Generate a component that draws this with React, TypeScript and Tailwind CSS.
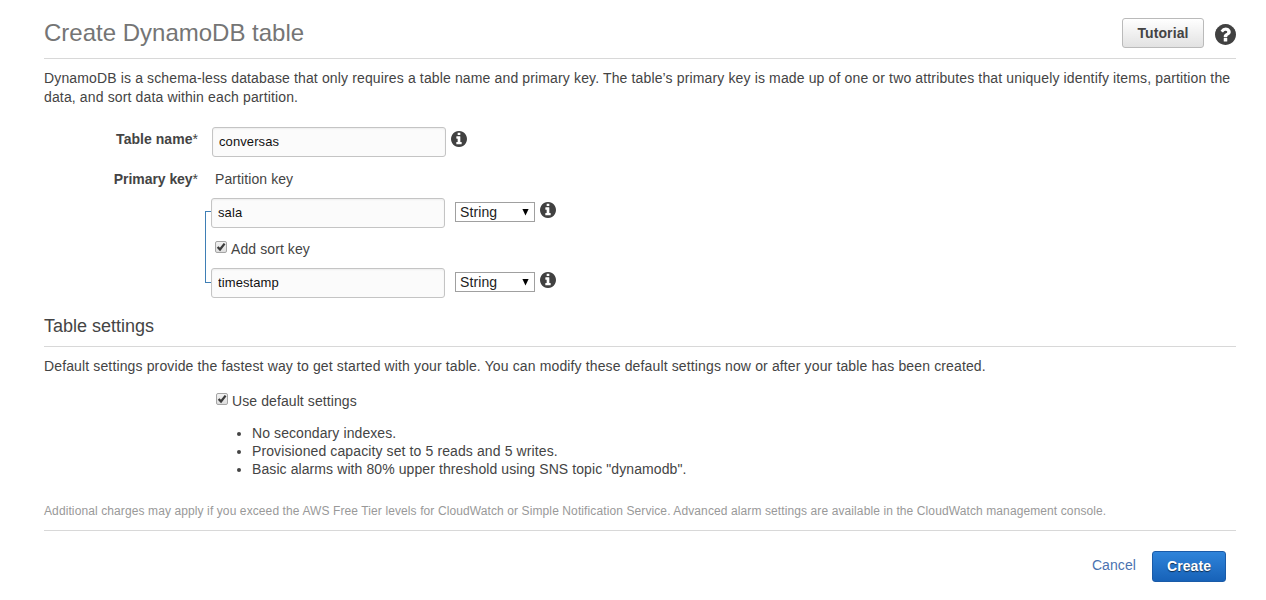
import React from "react";

const disc =
  "M1536 768q0 209-103 385.5t-279.5 279.5-385.5 103-385.5-103-279.5-279.5-103-385.5 103-385.5 279.5-279.5 385.5-103 385.5 103 279.5 279.5 103 385.5z";
const infoMark =
  "M1024 1248v-160q0-14-9-23t-23-9h-96v-512q0-14-9-23t-23-9h-320q-14 0-23 9t-9 23v160q0 14 9 23t23 9h96v320h-96q-14 0-23 9t-9 23v160q0 14 9 23t23 9h448q14 0 23-9t9-23zM896 352v-160q0-14-9-23t-23-9h-192q-14 0-23 9t-9 23v160q0 14 9 23t23 9h192q14 0 23-9t9-23z";
const questionMark =
  "M896 1248v-192q0-14-9-23t-23-9h-192q-14 0-23 9t-9 23v192q0 14 9 23t23 9h192q14 0 23-9t9-23zM1152 576q0-88-55.5-163t-138.5-116-170-41q-243 0-371 213-15 24 8 42l132 100q7 6 19 6 16 0 25-12 53-68 86-92 34-24 86-24 48 0 85.5 26t37.5 59q0 38-20 61t-68 45q-63 28-115.5 86.5t-52.5 125.5v36q0 14 9 23t23 9h192q14 0 23-9t9-23q0-19 21.5-49.5t54.5-49.5q32-18 49-28.5t46-35 44.5-48 28-60.5 12.5-81z";

function Badge({ mark, className }: { mark: string; className: string }) {
  return (
    <svg viewBox="0 0 1536 1536" className={"shrink-0 " + className}>
      <path d={disc} fill="#414141" />
      <path d={mark} fill="#fff" />
    </svg>
  );
}

function TextField({ value, label }: { value: string; label: string }) {
  return (
    <input
      aria-label={label}
      defaultValue={value}
      className="h-[30px] w-[234px] shrink-0 rounded-[3px] border border-[#c4c4c4] bg-[#fbfbfb] px-1.5 pb-px text-[13px] tracking-[0.1px] text-[#111] shadow-[inset_0_1px_2px_rgba(0,0,0,0.06)] outline-none"
    />
  );
}

function TypeSelect() {
  return (
    <div className="relative ml-2.5 h-5 w-20 shrink-0">
      <select
        aria-label="Attribute type"
        defaultValue="String"
        className="block h-5 w-20 appearance-none border border-[#a0a0a0] bg-white pl-1 text-[14px] leading-[18px] tracking-[0.1px] text-[#222] outline-none"
      >
        <option>String</option>
        <option>Number</option>
        <option>Binary</option>
      </select>
      <svg viewBox="0 0 7 7" className="pointer-events-none absolute top-[7px] right-1.5 h-[7px] w-[7px]">
        <path d="M.4 0h6.2L3.5 6.4z" fill="#000" />
      </svg>
    </div>
  );
}

function Info({ className }: { className: string }) {
  return <Badge mark={infoMark} className={"h-4 w-4 " + className} />;
}

function Check({ label }: { label: string }) {
  return (
    <label className="flex items-start">
      <span className="relative mt-0.5 h-3 w-3">
        <input
          type="checkbox"
          defaultChecked
          className="block h-3 w-3 appearance-none rounded-[2px] border border-[#a5a5a5] bg-linear-to-b from-[#f2f2f2] to-[#dedede]"
        />
        <svg viewBox="0 0 12 12" className="pointer-events-none absolute inset-0 h-3 w-3">
          <path d="M2.6 6 5 8.4 9.6 2.6" fill="none" stroke="#3c3c3c" strokeWidth="2.3" />
        </svg>
      </span>
      <span className="ml-1 leading-5">{label}</span>
    </label>
  );
}

export default function App() {
  return (
    <main className="h-[600px] w-[1266px] overflow-hidden bg-white pr-[30px] pl-11 font-['Liberation_Sans',Arial,sans-serif] text-[14px] tracking-[0.09px] text-[#444]">
      <header className="flex h-[59px] items-start justify-between border-b border-[#d8d8d8]">
        <h1 className="mt-[18px] text-[24px] leading-[30px] tracking-normal text-[#757575]">Create DynamoDB table</h1>
        <div className="flex">
          <button className="mt-[18px] h-[30px] w-[82px] rounded-[3px] border border-[#bababa] bg-linear-to-b from-white to-[#e2e2e2] text-[14px] font-bold text-[#444]">
            Tutorial
          </button>
          <Badge mark={questionMark} className="mt-6 ml-[11px] h-[21px] w-[21px]" />
        </div>
      </header>

      <p className="mt-2.5 h-[58px] leading-[19px] tracking-[0.139px]">
        DynamoDB is a schema-less database that only requires a table name and primary key. The table’s primary key is made up of one or two attributes that uniquely identify items, partition the
        <br />
        data, and sort data within each partition.
      </p>

      <div className="flex h-[42px]">
        <div className="w-[154px] pt-0.5 text-right leading-5 tracking-[0.04px]">
          <b>Table name</b>*
        </div>
        <div className="ml-3.5 flex">
          <TextField label="Table name" value="conversas" />
          <Info className="mt-[4.4px] ml-[5px]" />
        </div>
      </div>

      <div className="flex h-[29px]">
        <div className="w-[154px] text-right leading-5 tracking-[-0.05px]">
          <b>Primary key</b>*
        </div>
        <div className="ml-[17px] leading-5">Partition key</div>
      </div>

      <div className="ml-[161px] flex h-[100px]">
        <div className="mt-[13px] h-[72px] w-1.5 border-y border-l border-[#3f7fb5]" />
        <div className="flex flex-col">
          <div className="flex h-[41px]">
            <TextField label="Partition key" value="sala" />
            <div className="flex pt-1">
              <TypeSelect />
              <Info className="mt-[0.4px] ml-[5px]" />
            </div>
          </div>
          <div className="h-[29px] pl-1">
            <Check label="Add sort key" />
          </div>
          <div className="flex">
            <TextField label="Sort key" value="timestamp" />
            <div className="flex pt-1">
              <TypeSelect />
              <Info className="mt-[0.4px] ml-[5px]" />
            </div>
          </div>
        </div>
      </div>

      <section>
        <h2 className="h-[49px] border-b border-[#d8d8d8] pt-[17px] text-[18px] leading-[22px] tracking-normal">Table settings</h2>
        <p className="pt-2.5 leading-[19px] tracking-[0.134px]">
          Default settings provide the fastest way to get started with your table. You can modify these default settings now or after your table has been created.
        </p>
        <div className="mt-[15px] h-[33px] pl-[172px]">
          <Check label="Use default settings" />
        </div>
        <ul className="ml-[208px] list-disc leading-[18px]">
          <li>No secondary indexes.</li>
          <li className="tracking-[0.11px]">Provisioned capacity set to 5 reads and 5 writes.</li>
          <li>Basic alarms with 80% upper threshold using SNS topic "dynamodb".</li>
        </ul>
        <p className="mt-[25px] h-[28px] border-b border-[#d8d8d8] text-[12px] leading-4 tracking-[0.104px] text-[#999]">
          Additional charges may apply if you exceed the AWS Free Tier levels for CloudWatch or Simple Notification Service. Advanced alarm settings are available in the CloudWatch management console.
        </p>
      </section>

      <footer className="mt-5 flex justify-end pr-2.5">
        <a className="mr-4 leading-[29px] text-[#4a72b0]">Cancel</a>
        <button className="h-[31px] w-[74px] rounded-[3px] border border-[#1a5ba8] bg-linear-to-b from-[#2f84da] to-[#1762b8] text-[14px] font-bold text-white [text-shadow:0_1px_1px_rgba(0,0,0,0.6)]">
          Create
        </button>
      </footer>
    </main>
  );
}
